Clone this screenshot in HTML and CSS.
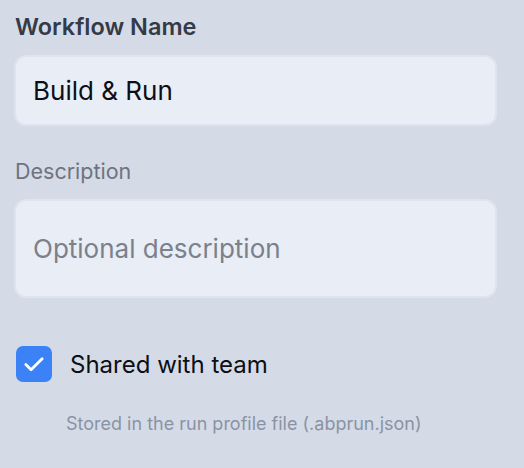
FILE: index.html
```html
<!DOCTYPE html>
<html lang="en">
<head>
  <meta charset="UTF-8">
  <title>Workflow</title>
  <link rel="stylesheet" href="styles.css">
</head>
<body>
  <form class="workflow-form">
    <label class="field-title" for="name">Workflow Name</label>
    <input class="field-input" id="name" type="text" value="Build &amp; Run">

    <label class="field-label" for="desc">Description</label>
    <textarea class="field-input field-area" id="desc" placeholder="Optional description"></textarea>

    <label class="check-row">
      <span class="check-box">
        <svg viewBox="0 0 24 24" width="28" height="28"><path d="M5 12.5l4.5 4.5L19 7.5" fill="none" stroke="#fff" stroke-width="2.4" stroke-linecap="round" stroke-linejoin="round"/></svg>
      </span>
      <span class="check-text">Shared with team</span>
    </label>
    <p class="hint">Stored in the run profile file (.abprun.json)</p>
  </form>
</body>
</html>
```

FILE: styles.css
```css
body {
  margin: 0;
  background-color: #d4dbe7;
  font-family: Inter, "Noto Sans", sans-serif;
}
.workflow-form {
  width: 483px;
  padding: 12px 0 0 14px;
  display: flex;
  flex-direction: column;
}
.field-title {
  font-size: 23.5px;
  font-weight: 600;
  color: #343a46;
  margin-left: 1px;
  line-height: 30px;
}
.field-label {
  font-size: 21.5px;
  color: #6e7380;
  margin: 30px 0 0 1px;
  line-height: 30px;
}
.field-input {
  box-sizing: border-box;
  margin-top: 13px;
  width: 483px;
  height: 71px;
  padding: 0 17px;
  border: 2px solid #dde4f0;
  border-radius: 12px;
  background-color: #e8edf6;
  font-family: inherit;
  font-size: 26px;
  color: #0c0f14;
  outline: none;
}
.field-area {
  height: 99px;
  padding-top: 32px;
  resize: none;
  overflow: hidden;
}
.field-area::placeholder {
  color: #7b808b;
}
.check-row {
  display: flex;
  align-items: center;
  gap: 18px;
  margin: 48px 0 0 2px;
}
.check-box {
  width: 36px;
  height: 36px;
  border-radius: 7px;
  background-color: #3b82f6;
  display: flex;
  align-items: center;
  justify-content: center;
}
.check-text {
  font-size: 24px;
  color: #0c0f14;
}
.hint {
  margin: 31px 0 0 52px;
  font-size: 18px;
  color: #8a93a4;
}
```
